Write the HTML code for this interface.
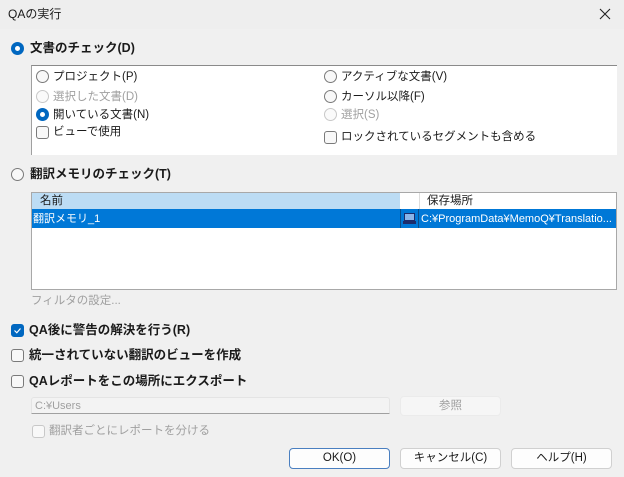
<!DOCTYPE html>
<html><head><meta charset="utf-8"><style>
*{margin:0;padding:0;box-sizing:border-box}
body{width:624px;height:477px;background:#f0f0f0;font-family:"Liberation Sans","Noto Sans CJK JP",sans-serif;font-size:11.5px;color:#1a1a1a;position:relative;overflow:hidden}
.a{position:absolute;white-space:nowrap;line-height:14px}
.rb{position:absolute;width:13px;height:13px;border-radius:50%;border:1px solid #7a7a7a;background:#f8f8f8}
.rb.on{border:none;background:#0067c0}
.rb.on::after{content:"";position:absolute;left:4px;top:4px;width:5px;height:5px;border-radius:50%;background:#fff}
.rb.dis{border-color:#c8c8c8;background:#fafafa}
.cb{position:absolute;width:13px;height:13px;border-radius:3px;border:1px solid #7a7a7a;background:#f8f8f8}
.cb.on{background:#0067c0;border-color:#0067c0}
.cb.dis{border-color:#c8c8c8}
.b{font-weight:bold;font-size:12.5px}
.g{color:#a0a0a0}
.btn{position:absolute;height:21px;border:1px solid #d0d0d0;border-radius:4px;background:#fdfdfd;text-align:center;line-height:19px;font-size:11.5px}
</style></head><body>
<div style="position:absolute;left:0;top:0;width:624px;height:29px;background:#eeeeee"></div>
<div class="a" style="left:8px;top:7px;font-size:12px">QAの実行</div>
<svg style="position:absolute;left:599px;top:8px" width="12" height="12"><path d="M1 1L11 11M11 1L1 11" stroke="#222" stroke-width="1.1"/></svg>

<div class="rb on" style="left:11px;top:42px"></div>
<div class="a b" style="left:30px;top:41px">文書のチェック(D)</div>

<div style="position:absolute;left:31px;top:65px;width:586px;height:90px;background:#fff;border-top:1px solid #8a8a8a;border-left:1px solid #a0a0a0"></div>
<div class="rb" style="left:36px;top:70px"></div><div class="a" style="left:53px;top:70px">プロジェクト(P)</div>
<div class="rb dis" style="left:36px;top:90px"></div><div class="a g" style="left:53px;top:90px">選択した文書(D)</div>
<div class="rb on" style="left:36px;top:108px"></div><div class="a" style="left:53px;top:108px">開いている文書(N)</div>
<div class="cb" style="left:36px;top:126px"></div><div class="a" style="left:53px;top:125px">ビューで使用</div>
<div class="rb" style="left:324px;top:70px"></div><div class="a" style="left:341px;top:70px">アクティブな文書(V)</div>
<div class="rb" style="left:324px;top:90px"></div><div class="a" style="left:341px;top:90px">カーソル以降(F)</div>
<div class="rb dis" style="left:324px;top:108px"></div><div class="a g" style="left:341px;top:108px">選択(S)</div>
<div class="cb" style="left:324px;top:131px"></div><div class="a" style="left:341px;top:130px">ロックされているセグメントも含める</div>

<div class="rb" style="left:11px;top:168px"></div>
<div class="a b" style="left:30px;top:167px">翻訳メモリのチェック(T)</div>

<div style="position:absolute;left:31px;top:192px;width:586px;height:98px;background:#fff;border:1px solid #a8a8a8"></div>
<div style="position:absolute;left:32px;top:193px;width:368px;height:16px;background:#bcdcf4"></div>
<div style="position:absolute;left:419px;top:193px;width:1px;height:16px;background:#ddd"></div>
<div class="a" style="left:40px;top:194px">名前</div>
<div class="a" style="left:427px;top:194px">保存場所</div>
<div style="position:absolute;left:32px;top:209px;width:584px;height:19px;background:#0078d7"></div>
<div style="position:absolute;left:400px;top:209px;width:1px;height:19px;background:#0a4e8a"></div>
<div style="position:absolute;left:418px;top:209px;width:1px;height:19px;background:#0a4e8a"></div>
<div class="a" style="left:33px;top:212px;color:#fff;font-size:11px">翻訳メモリ_1</div>
<svg style="position:absolute;left:403px;top:212px" width="13" height="12"><rect x="1.5" y="1.5" width="10" height="7" fill="#8ab4e8" stroke="#1c2c6c"/><rect x="0" y="9" width="13" height="3" fill="#1c2c6c"/></svg>
<div class="a" style="left:421px;top:212px;color:#fff;font-size:11px;width:194px;overflow:hidden">C:¥ProgramData¥MemoQ¥Translatio...</div>

<div class="a g" style="left:31px;top:294px">フィルタの設定...</div>

<div class="cb on" style="left:11px;top:324px"></div>
<svg style="position:absolute;left:13px;top:326px" width="9" height="9"><path d="M1.5 4.5L3.8 6.8L7.5 2.5" stroke="#fff" stroke-width="1.2" fill="none"/></svg>
<div class="a b" style="left:29px;top:323px">QA後に警告の解決を行う(R)</div>
<div class="cb" style="left:11px;top:349px"></div>
<div class="a b" style="left:29px;top:348px">統一されていない翻訳のビューを作成</div>
<div class="cb" style="left:11px;top:375px"></div>
<div class="a b" style="left:29px;top:374px">QAレポートをこの場所にエクスポート</div>

<div style="position:absolute;left:31px;top:397px;width:359px;height:17px;background:#f3f3f3;border-bottom:1px solid #a0a0a0;border-radius:3px 3px 0 0;border-top:1px solid #e4e4e4;border-left:1px solid #e4e4e4;border-right:1px solid #e4e4e4"></div>
<div class="a g" style="left:35px;top:399px;font-size:11px">C:¥Users</div>
<div class="btn g" style="left:400px;top:396px;width:101px;height:20px;border-color:#ebebeb;background:#f6f6f6;line-height:18px">参照</div>

<div class="cb dis" style="left:32px;top:425px"></div>
<div class="a g" style="left:49px;top:424px">翻訳者ごとにレポートを分ける</div>

<div class="btn" style="left:289px;top:448px;width:101px;border-color:#4a7fc0">OK(O)</div>
<div class="btn" style="left:400px;top:448px;width:101px">キャンセル(C)</div>
<div class="btn" style="left:511px;top:448px;width:101px">ヘルプ(H)</div>
</body></html>
